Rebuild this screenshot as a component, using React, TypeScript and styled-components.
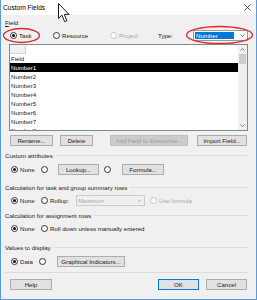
import React from "react";
import styled, { createGlobalStyle } from "styled-components";

const GlobalStyle = createGlobalStyle`
  html, body {
    margin: 0;
    padding: 0;
    background: #ffffff;
  }
  body {
    font-family: "Liberation Sans", Arial, sans-serif;
    font-size: 6.1px;
    color: #1a1a1a;
  }
`;

const Window = styled.div`
  position: relative;
  width: 257px;
  height: 300px;
  box-sizing: border-box;
  border: 1px solid #5b9ad8;
  border-top: none;
  background: #f0f0f0;
  display: flex;
  flex-direction: column;
  overflow: hidden;
`;

const TitleBar = styled.div`
  height: 15px;
  flex: none;
  background: #ffffff;
  display: flex;
  align-items: center;
  justify-content: space-between;
  padding: 0 5px 0 2px;
  font-size: 6.6px;
  color: #000;
`;

const Body = styled.div`
  display: flex;
  flex-direction: column;
  padding: 0 8px 0 4px;
`;

const SectionLabel = styled.div<{ $mt: number; $line?: boolean }>`
  height: 8px;
  margin-top: ${(p) => p.$mt}px;
  display: flex;
  align-items: center;
  gap: 3px;
  white-space: nowrap;
  &::after {
    content: "";
    flex: 1;
    height: 1px;
    background: ${(p) => (p.$line ? "#dcdcdc" : "transparent")};
  }
  u {
    text-decoration: underline;
  }
`;

const Row = styled.div<{ $mt: number; $h?: number; $pl?: number }>`
  height: ${(p) => p.$h ?? 12}px;
  margin-top: ${(p) => p.$mt}px;
  padding-left: ${(p) => p.$pl ?? 6}px;
  display: flex;
  align-items: center;
  white-space: nowrap;
  position: relative;
`;

const Cell = styled.div<{ $w?: number; $ml?: number; $disabled?: boolean }>`
  width: ${(p) => (p.$w ? `${p.$w}px` : "auto")};
  margin-left: ${(p) => p.$ml ?? 0}px;
  flex: none;
  display: flex;
  align-items: center;
  gap: 2px;
  color: ${(p) => (p.$disabled ? "#a6a6a6" : "inherit")};
  position: relative;
`;

const Radio = styled.span<{ $checked?: boolean; $disabled?: boolean }>`
  width: 7px;
  height: 7px;
  box-sizing: border-box;
  border-radius: 50%;
  border: 1px solid ${(p) => (p.$disabled ? "#c4c4c4" : "#333")};
  background: #fff;
  flex: none;
  position: relative;
  &::after {
    content: "";
    display: ${(p) => (p.$checked ? "block" : "none")};
    position: absolute;
    left: 1px;
    top: 1px;
    width: 3px;
    height: 3px;
    border-radius: 50%;
    background: #111;
  }
`;

const Button = styled.div<{
  $w: number;
  $ml?: number;
  $disabled?: boolean;
  $default?: boolean;
}>`
  width: ${(p) => p.$w}px;
  height: 11px;
  margin-left: ${(p) => p.$ml ?? 0}px;
  box-sizing: border-box;
  flex: none;
  display: flex;
  align-items: center;
  justify-content: center;
  background: ${(p) => (p.$disabled ? "#cccccc" : "#e1e1e1")};
  border: 1px solid
    ${(p) => (p.$default ? "#0078d7" : p.$disabled ? "#bfbfbf" : "#adadad")};
  color: ${(p) => (p.$disabled ? "#a0a0a0" : "#1a1a1a")};
  white-space: nowrap;
`;

const Combo = styled.div<{ $w: number; $disabled?: boolean }>`
  width: ${(p) => p.$w}px;
  height: 11px;
  box-sizing: border-box;
  flex: none;
  display: flex;
  align-items: center;
  justify-content: space-between;
  padding: 0 2px 0 1px;
  background: ${(p) => (p.$disabled ? "#f0f0f0" : "#fff")};
  border: 1px solid ${(p) => (p.$disabled ? "#cccccc" : "#9a9a9a")};
  color: ${(p) => (p.$disabled ? "#a6a6a6" : "#1a1a1a")};
`;

const Selected = styled.span`
  background: #0078d7;
  color: #fff;
  height: 7px;
  line-height: 7px;
  width: 38px;
  padding-left: 1px;
`;

const Ellipse = styled.svg<{ $l: number; $t: number }>`
  position: absolute;
  left: ${(p) => p.$l}px;
  top: ${(p) => p.$t}px;
  overflow: visible;
  pointer-events: none;
`;

const ListBox = styled.div`
  margin: 2px 0 0 4px;
  height: 87px;
  box-sizing: border-box;
  border: 1px solid #828790;
  background: #fff;
  display: flex;
  overflow: hidden;
`;

const ListContent = styled.div`
  flex: 1;
  display: flex;
  flex-direction: column;
  overflow: hidden;
`;

const EditRow = styled.div`
  height: 9px;
  flex: none;
  display: flex;
`;

const RowHeader = styled.div`
  width: 16px;
  background: #f0f0f0;
  border-right: 1px solid #d6d6d6;
  border-bottom: 1px solid #d6d6d6;
  box-sizing: border-box;
`;

const ListRow = styled.div<{ $selected?: boolean }>`
  height: 9px;
  flex: none;
  display: flex;
  align-items: center;
  padding-left: 1px;
  background: ${(p) => (p.$selected ? "#000" : "transparent")};
  color: ${(p) => (p.$selected ? "#fff" : "#1a1a1a")};
`;

const ScrollBar = styled.div`
  width: 9px;
  flex: none;
  background: #f0f0f0;
  display: flex;
  flex-direction: column;
  align-items: center;
`;

const ScrollArrow = styled.div`
  height: 9px;
  display: flex;
  align-items: center;
  justify-content: center;
`;

const Thumb = styled.div`
  width: 7px;
  height: 10px;
  background: #cdcdcd;
`;

const Track = styled.div`
  flex: 1;
`;

const Separator = styled.div<{ $mt: number }>`
  height: 1px;
  margin-top: ${(p) => p.$mt}px;
  background: #dcdcdc;
`;

const FooterRow = styled.div`
  margin-top: 6px;
  padding-left: 5px;
  display: flex;
  align-items: center;
`;

const Cursor = styled.svg`
  position: absolute;
  left: 57px;
  top: 3px;
`;

const Chevron = ({ color = "#555" }: { color?: string }) => (
  <svg width="5" height="3" viewBox="0 0 5 3">
    <path d="M0.5 0.5 L2.5 2.5 L4.5 0.5" fill="none" stroke={color} strokeWidth="0.8" />
  </svg>
);

const UpChevron = () => (
  <svg width="5" height="3" viewBox="0 0 5 3">
    <path d="M0.5 2.5 L2.5 0.5 L4.5 2.5" fill="none" stroke="#606060" strokeWidth="0.8" />
  </svg>
);

const items = ["Number1", "Number2", "Number3", "Number4", "Number5", "Number6", "Number7", "Number8"];

export default function App() {
  return (
    <>
      <GlobalStyle />
      <Window>
        <TitleBar>
          <span>Custom Fields</span>
          <svg width="7" height="7" viewBox="0 0 7 7">
            <path d="M0.5 0.5 L6.5 6.5 M6.5 0.5 L0.5 6.5" stroke="#222" strokeWidth="0.8" />
          </svg>
        </TitleBar>
        <Body>
          <SectionLabel $mt={3}>
            <span>
              <u>F</u>ield
            </span>
          </SectionLabel>
          <Row $mt={2} $h={14} $pl={5}>
            <Cell $w={43}>
              <Radio $checked />
              <span>Task</span>
              <Ellipse $l={-7} $t={-4} width="37" height="15">
                <ellipse cx="18.5" cy="7.5" rx="18" ry="7" fill="none" stroke="#e0282e" strokeWidth="1.3" />
              </Ellipse>
            </Cell>
            <Cell $w={57}>
              <Radio />
              <span>Resource</span>
            </Cell>
            <Cell $w={48} $disabled>
              <Radio $disabled />
              <span>Project</span>
            </Cell>
            <Cell $w={35}>
              <span>Type:</span>
            </Cell>
            <Cell>
              <Combo $w={55}>
                <Selected>Number</Selected>
                <Chevron />
              </Combo>
              <Ellipse $l={-7} $t={-3.5} width="67" height="18">
                <ellipse cx="33.5" cy="9" rx="33" ry="8.5" fill="none" stroke="#e0282e" strokeWidth="1.3" />
              </Ellipse>
            </Cell>
          </Row>
          <ListBox>
            <ListContent>
              <EditRow>
                <RowHeader />
              </EditRow>
              <ListRow>Field</ListRow>
              {items.map((it, i) => (
                <ListRow key={it} $selected={i === 0}>
                  {it}
                </ListRow>
              ))}
            </ListContent>
            <ScrollBar>
              <ScrollArrow>
                <UpChevron />
              </ScrollArrow>
              <Thumb />
              <Track />
              <ScrollArrow>
                <Chevron color="#606060" />
              </ScrollArrow>
            </ScrollBar>
          </ListBox>
          <Row $mt={4} $h={11} $pl={5}>
            <Button $w={43}>Rename...</Button>
            <Button $w={33} $ml={7}>Delete</Button>
            <Button $w={78} $ml={17} $disabled>
              Add Field to Enterprise...
            </Button>
            <Button $w={50} $ml={9}>Import Field...</Button>
          </Row>
          <SectionLabel $mt={5} $line>
            Custom attributes
          </SectionLabel>
          <Row $mt={4}>
            <Cell $w={30}>
              <Radio $checked />
              <span>None</span>
            </Cell>
            <Cell $w={17}>
              <Radio />
            </Cell>
            <Button $w={41}>Lookup...</Button>
            <Cell $w={18} $ml={5}>
              <Radio />
            </Cell>
            <Button $w={42}>Formula...</Button>
          </Row>
          <SectionLabel $mt={8} $line>
            Calculation for task and group summary rows
          </SectionLabel>
          <Row $mt={3}>
            <Cell $w={30}>
              <Radio $checked />
              <span>None</span>
            </Cell>
            <Cell $w={35}>
              <Radio />
              <span>Rollup:</span>
            </Cell>
            <Combo $w={69} $disabled>
              <span>Maximum</span>
              <Chevron color="#b0b0b0" />
            </Combo>
            <Cell $disabled $ml={5}>
              <Radio $disabled />
              <span>Use formula</span>
            </Cell>
          </Row>
          <SectionLabel $mt={5} $line>
            Calculation for assignment rows
          </SectionLabel>
          <Row $mt={3}>
            <Cell $w={30}>
              <Radio $checked />
              <span>None</span>
            </Cell>
            <Cell>
              <Radio />
              <span>Roll down unless manually entered</span>
            </Cell>
          </Row>
          <SectionLabel $mt={9} $line>
            Values to display
          </SectionLabel>
          <Row $mt={4}>
            <Cell $w={28}>
              <Radio $checked />
              <span>Data</span>
            </Cell>
            <Cell $w={18}>
              <Radio />
            </Cell>
            <Button $w={68}>Graphical Indicators...</Button>
          </Row>
          <Separator $mt={5} />
          <FooterRow>
            <Button $w={42}>Help</Button>
            <Button $w={41} $ml={106} $default>
              OK
            </Button>
            <Button $w={41} $ml={7}>Cancel</Button>
          </FooterRow>
        </Body>
        <Cursor width="12" height="20" viewBox="0 0 12 20">
          <path
            d="M0.5 0.5 L0.5 15.5 L4 12.2 L6.6 18.6 L8.8 17.7 L6.3 11.4 L11 11.4 Z"
            fill="#fff"
            stroke="#000"
            strokeWidth="0.9"
            strokeLinejoin="round"
          />
        </Cursor>
      </Window>
    </>
  );
}
